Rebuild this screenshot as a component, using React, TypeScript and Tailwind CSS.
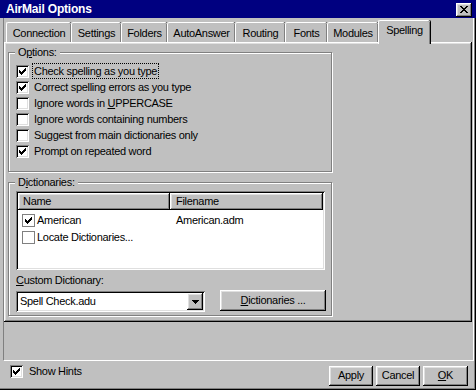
import React from "react";

const raised =
  "shadow-[inset_-1px_-1px_#000,inset_1px_1px_#fff,inset_-2px_-2px_#808080,inset_2px_2px_#dfdfdf]";
const sunken =
  "shadow-[inset_1px_1px_#808080,inset_-1px_-1px_#fff,inset_2px_2px_#000,inset_-2px_-2px_#dfdfdf]";

function Mark() {
  return (
    <svg width="7" height="7" viewBox="0 0 7 7" shapeRendering="crispEdges">
      <rect x="6" y="0" width="1" height="1" fill="#000" />
      <rect x="5" y="1" width="2" height="1" fill="#000" />
      <rect x="0" y="2" width="1" height="1" fill="#000" />
      <rect x="4" y="2" width="3" height="1" fill="#000" />
      <rect x="0" y="3" width="2" height="1" fill="#000" />
      <rect x="3" y="3" width="3" height="1" fill="#000" />
      <rect x="0" y="4" width="5" height="1" fill="#000" />
      <rect x="1" y="5" width="3" height="1" fill="#000" />
      <rect x="2" y="6" width="1" height="1" fill="#000" />
    </svg>
  );
}

function Check({ checked }: { checked?: boolean }) {
  return (
    <span className={`w-[13px] h-[13px] bg-white ${sunken} flex items-center justify-center shrink-0`}>
      {checked && <Mark />}
    </span>
  );
}

function FlatCheck({ checked }: { checked?: boolean }) {
  return (
    <span className="w-[13px] h-[13px] bg-white border border-[#808080] flex items-center justify-center shrink-0">
      {checked && <Mark />}
    </span>
  );
}

function Tab({ label, selected, w }: { label: string; selected?: boolean; w: string }) {
  if (selected) {
    return (
      <div
        className={`relative z-10 ${w} h-[24px] -mb-[2px] bg-[#c0c0c0] border-l border-t border-white rounded-tl-[2px] rounded-tr-[2px] shadow-[inset_-1px_0_#808080,1px_0_#000] pt-[2px] leading-[14px] text-center`}
      >
        {label}
      </div>
    );
  }
  return (
    <div
      className={`${w} h-[20px] bg-[#c0c0c0] border-l border-t border-white rounded-tl-[2px] rounded-tr-[2px] shadow-[inset_-1px_0_#808080,1px_0_#000] pt-[3px] leading-[14px] text-center`}
    >
      {label}
    </div>
  );
}

function Group({
  label,
  className,
  children,
}: {
  label: React.ReactNode;
  className?: string;
  children: React.ReactNode;
}) {
  return (
    <div className={`relative border border-[#808080] shadow-[inset_1px_1px_#fff,1px_1px_#fff] ${className ?? ""}`}>
      <span className="absolute -top-[8px] left-[6px] bg-[#c0c0c0] px-[3px] leading-[14px]">{label}</span>
      {children}
    </div>
  );
}

function OptRow({
  checked,
  children,
  focus,
}: {
  checked?: boolean;
  children: React.ReactNode;
  focus?: boolean;
}) {
  return (
    <div className="h-[16px] flex items-center pl-[7px]">
      <Check checked={checked} />
      <span
        className={`ml-[4px] px-[1px] leading-[14px] ${focus ? "outline outline-1 outline-dotted outline-black" : ""}`}
      >
        {children}
      </span>
    </div>
  );
}

export default function App() {
  return (
    <div
      className={`w-[476px] h-[390px] bg-[#c0c0c0] text-black text-[11px] tracking-[-0.3px] font-['Liberation_Sans',Arial,sans-serif] flex flex-col shadow-[inset_-1px_-1px_#000,inset_-2px_-2px_#808080] overflow-hidden select-none`}
    >
      {/* Title bar */}
      <div className="h-[18px] bg-[#000080] flex items-center justify-between pl-[6px] pr-[4px] shrink-0">
        <span className="text-white font-bold text-[12px] leading-[14px] tracking-[-0.2px]">AirMail Options</span>
        <div className={`w-[16px] h-[14px] bg-[#c0c0c0] ${raised} flex items-center justify-center mt-[1px]`}>
          <svg width="8" height="7" viewBox="0 0 8 7" shapeRendering="crispEdges">
            <path d="M0 0h2v1h1v1h2V1h1V0h2v1H7v1H6v1H5v1h1v1h1v1h1v1H6V6H5V5H3v1H2v1H0V6h1V5h1V4h1V3H2V2H1V1H0z" fill="#000" />
          </svg>
        </div>
      </div>

      {/* Frame holding tabs + hint area */}
      <div className="ml-[3px] mr-[2px] flex flex-col border-l border-[#808080] border-r border-r-white border-b border-b-white h-[343px]">
        {/* Tabs */}
        <div className="flex items-end h-[24px] pl-[2px] pt-[2px]">
          <Tab label="Connection" w="w-[65px]" />
          <Tab label="Settings" w="w-[50px]" />
          <Tab label="Folders" w="w-[46px]" />
          <Tab label="AutoAnswer" w="w-[68px]" />
          <Tab label="Routing" w="w-[50px]" />
          <Tab label="Fonts" w="w-[42px]" />
          <Tab label="Modules" w="w-[51px]" />
          <Tab label="Spelling" w="w-[52px]" selected />
        </div>

        {/* Panel */}
        <div className={`h-[280px] mr-[1px] ${raised} p-[4px] pt-[10px]`}>
          <Group
            label={
              <>
                <span>O</span>
                <span className="underline">p</span>
                <span>tions:</span>
              </>
            }
            className="w-[324px] h-[120px] pt-[10px]"
          >
            <OptRow checked focus>
              Check spelling as you type
            </OptRow>
            <OptRow checked>Correct spelling errors as you type</OptRow>
            <OptRow>
              Ignore words in <span className="underline">U</span>PPERCASE
            </OptRow>
            <OptRow>Ignore words containing numbers</OptRow>
            <OptRow>Suggest from main dictionaries only</OptRow>
            <OptRow checked>Prompt on repeated word</OptRow>
          </Group>

          <Group
            label={
              <>
                D<span className="underline">i</span>ctionaries:
              </>
            }
            className="w-[324px] h-[134px] mt-[10px] pt-[8px] pl-[7px]"
          >
            {/* List view */}
            <div className={`w-[309px] h-[79px] bg-white ${sunken} p-[2px] flex flex-col`}>
              <div className="flex h-[17px]">
                <div className={`w-[152px] ${raised} bg-[#c0c0c0] pl-[5px] leading-[17px]`}>Name</div>
                <div className={`flex-1 ${raised} bg-[#c0c0c0] pl-[6px] leading-[17px]`}>Filename</div>
              </div>
              <div className="flex items-center h-[17px] mt-[2px] pl-[4px]">
                <FlatCheck checked />
                <span className="ml-[2px] w-[139px]">American</span>
                <span>American.adm</span>
              </div>
              <div className="flex items-center h-[17px] pl-[4px]">
                <FlatCheck />
                <span className="ml-[2px]">Locate Dictionaries...</span>
              </div>
            </div>

            <div className="flex items-end mt-[3px]">
              <div className="flex flex-col">
                <span className="leading-[14px] mb-[4px]">
                  <span className="underline">C</span>ustom Dictionary:
                </span>
                <div className={`w-[189px] h-[21px] bg-white ${sunken} flex items-center pl-[4px] pr-[2px]`}>
                  <span className="flex-1">Spell Check.adu</span>
                  <div className={`w-[16px] h-[17px] bg-[#c0c0c0] ${raised} flex items-center justify-center`}>
                    <svg width="7" height="4" viewBox="0 0 7 4" shapeRendering="crispEdges">
                      <path d="M0 0h7v1H6v1H5v1H4v1H3V3H2V2H1V1H0z" fill="#000" />
                    </svg>
                  </div>
                </div>
              </div>
              <div className={`ml-[15px] mb-[1px] w-[106px] h-[21px] ${raised} flex items-center justify-center`}>
                <span>
                  <span className="underline">D</span>ictionaries ...
                </span>
              </div>
            </div>
          </Group>
        </div>
        <div className="flex-1" />
      </div>

      {/* Bottom */}
      <div className="flex items-center h-[27px] pl-[10px] pr-[8px]">
        <div className="flex items-center -mt-[6px]">
          <Check checked />
          <span className="ml-[6px]">Show Hints</span>
        </div>
        <div className="flex-1" />
        <div className="flex gap-[3px] mt-[2px]">
          <div className={`w-[44px] h-[20px] ${raised} flex items-center justify-center`}>Apply</div>
          <div className={`w-[44px] h-[20px] ${raised} flex items-center justify-center`}>Cancel</div>
          <div className={`w-[45px] h-[20px] ${raised} flex items-center justify-center`}>
            <span>
              <span className="underline">O</span>K
            </span>
          </div>
        </div>
      </div>
    </div>
  );
}
